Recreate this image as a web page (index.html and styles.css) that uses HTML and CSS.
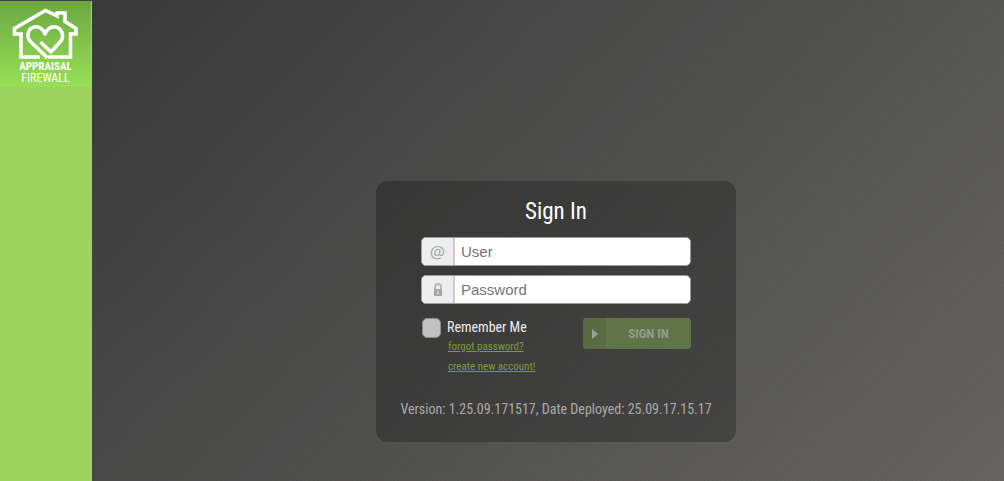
FILE: index.html
```html
<!DOCTYPE html>
<html lang="en">
<head>
  <meta charset="UTF-8">
  <meta name="viewport" content="width=device-width, initial-scale=1">
  <title>Appraisal Firewall</title>
  <link rel="stylesheet" href="styles.css">
</head>
<body>

  <aside class="sidebar">
    <div class="logo">
      <svg class="logo-mark" viewBox="0 0 74 58" fill="none" stroke="#fff" stroke-width="3.6" aria-hidden="true">
        <path d="M39 53H61.500V30H67V24.500L56 17.500V9H48V12L36.500 6.500L5.500 24.500V30H12V53H31"/>
        <path d="M31.500 38L42 48L51 38C56 33 53 24 46.500 23C41 22 37.500 26 36 30C34 25 30 22 25.500 23C19 24 17 32 21 37L38.500 54" stroke-linejoin="round"/>
      </svg>
      <strong>APPRAISAL</strong>
      <span>FIREWALL</span>
    </div>
  </aside>

  <main class="content">
    <section class="panel">
      <h1>Sign In</h1>
      <form class="login-form">
        <div class="field">
          <label for="user" aria-label="User">@</label>
          <input type="text" id="user" placeholder="User">
        </div>
        <div class="field">
          <label for="password" aria-label="Password">
            <svg width="10" height="14" viewBox="0 0 10 14" aria-hidden="true">
              <path d="M2 7V4a3 3 0 0 1 6 0v3" fill="none" stroke="#b9b9b9" stroke-width="2"/>
              <path d="M1 6h8v7H1z" fill="#a8a8a8"/>
              <path d="M4 8h2v3H4z" fill="#ccc"/>
            </svg>
          </label>
          <input type="password" id="password" placeholder="Password">
        </div>
        <div class="actions">
          <input type="checkbox" id="remember">
          <div class="options">
            <label for="remember">Remember Me</label>
            <a href="#">forgot password?</a>
            <a href="#">create new account!</a>
          </div>
          <button type="submit" disabled>
            <span class="arrow">
              <svg width="6" height="10" viewBox="0 0 6 10" aria-hidden="true"><path d="M0 0L6 5L0 10Z" fill="#9b9f95"/></svg>
            </span>
            <span class="caption">SIGN IN</span>
          </button>
        </div>
      </form>
      <p class="version">Version: 1.25.09.171517, Date Deployed: 25.09.17.15.17</p>
    </section>
  </main>

</body>
</html>
```
FILE: styles.css
```css
* {
  box-sizing: border-box;
}

body {
  margin: 0;
  min-height: 100vh;
  display: flex;
  font-family: "Roboto Condensed", "Liberation Sans Narrow", "Roboto", sans-serif;
  background:
    repeating-linear-gradient(45deg, rgba(0, 0, 0, 0.02) 0 1px, transparent 1px 3px),
    repeating-linear-gradient(135deg, rgba(0, 0, 0, 0.02) 0 1px, transparent 1px 3px),
    linear-gradient(135deg, #373737, #666563);
}

.sidebar {
  width: 92px;
  flex-shrink: 0;
  background-color: #9cd25e;
  border-top: 1px solid #3f3845;
}

.logo {
  height: 86px;
  padding-top: 3px;
  display: flex;
  flex-direction: column;
  align-items: center;
  background: linear-gradient(#6aa942, #98e056);
  border-right: 1px solid #a3d46c;
  color: #fff;
}

.logo strong {
  font-size: 11px;
  line-height: 10px;
}

.logo span {
  font-size: 12px;
  line-height: 12px;
}

.logo-mark {
  width: 74px;
  height: 58px;
}

.content {
  flex: 1;
  padding: 181px 16px 39px 32px;
}

.panel {
  max-width: 360px;
  margin: 0 auto;
  padding: 17px 12px 21px;
  border-radius: 12px;
  background-color: rgba(0, 0, 0, 0.24);
}

h1 {
  margin: 0 0 11px;
  color: #fff;
  font-size: 23px;
  font-weight: 400;
  line-height: 28px;
  text-align: center;
}

.login-form {
  max-width: 270px;
  margin: 0 auto;
}

.field {
  display: flex;
  height: 29px;
  margin-bottom: 9px;
  border: 1px solid #9b9b9b;
  border-radius: 5px;
  background-color: #fff;
  overflow: hidden;
}

.field label {
  width: 33px;
  display: flex;
  align-items: center;
  justify-content: center;
  background-color: #eee;
  border-right: 2px solid #ccc;
  color: #a8a8a8;
  font-family: "Noto Sans", sans-serif;
  font-size: 17px;
  line-height: 24px;
}

.field input {
  flex: 1;
  min-width: 0;
  padding: 0 6px;
  border: 0;
  background: none;
  font-family: "Liberation Sans", Arial, sans-serif;
  font-size: 15px;
}

.field input::placeholder {
  color: #757575;
}

.actions {
  display: flex;
  align-items: flex-start;
  padding-top: 5px;
}

.actions input {
  appearance: none;
  width: 19px;
  height: 20px;
  margin: 0 6px 0 1px;
  border: 1px solid #8c8c8c;
  border-radius: 5px;
  background-color: #c0c0c0;
}

.options {
  display: flex;
  flex-direction: column;
  align-items: flex-start;
  flex: 1;
}

.options label {
  color: #eee;
  font-size: 14px;
  line-height: 19px;
}

.options a {
  margin-left: 1px;
  color: #7d9b3c;
  font-size: 11px;
  line-height: 20px;
}

button {
  width: 108px;
  height: 31px;
  display: flex;
  padding: 0;
  border: 0;
  border-radius: 4px;
  overflow: hidden;
  background-color: #5f7547;
  color: #969a90;
  font-family: inherit;
  font-size: 13px;
  font-weight: 700;
}

.arrow {
  width: 23px;
  height: 31px;
  display: flex;
  align-items: center;
  justify-content: center;
  background-color: #586b43;
}

.caption {
  flex: 1;
  line-height: 31px;
}

.version {
  margin: 20px 0 0;
  color: #aaa;
  font-size: 14px;
  line-height: 24px;
  text-align: center;
}
```
